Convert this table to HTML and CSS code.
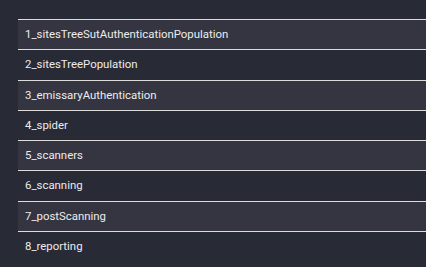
FILE: index.html
```html
<!DOCTYPE html>
<html>
  <head>
    <link rel="stylesheet" href="styles.css">
  </head>
  <body>
    <div class="stage-list">
      <table class="stages">
        <tr class="stage-row"><td>1_sitesTreeSutAuthenticationPopulation</td></tr>
        <tr class="stage-row"><td>2_sitesTreePopulation</td></tr>
        <tr class="stage-row"><td>3_emissaryAuthentication</td></tr>
        <tr class="stage-row"><td>4_spider</td></tr>
        <tr class="stage-row"><td>5_scanners</td></tr>
        <tr class="stage-row"><td>6_scanning</td></tr>
        <tr class="stage-row"><td>7_postScanning</td></tr>
        <tr class="stage-row"><td>8_reporting</td></tr>
      </table>
    </div>
  </body>
</html>
```

FILE: styles.css
```css
body{
  margin: 0;
  background-color: #282a36;
  font-family: Roboto, "Liberation Sans", sans-serif;
}
.stage-list{
  padding: 19px 0 0 18px;
}
.stages{
  width: 100%;
  border-collapse: collapse;
}
.stage-row td{
  border-top: 1px solid #dcdcdc;
  padding: 8px 7px;
  font-size: 11.4px;
  line-height: 13.3px;
  color: #ececec;
}
.stage-row:nth-child(odd){
  background-color: #343541;
}
```
